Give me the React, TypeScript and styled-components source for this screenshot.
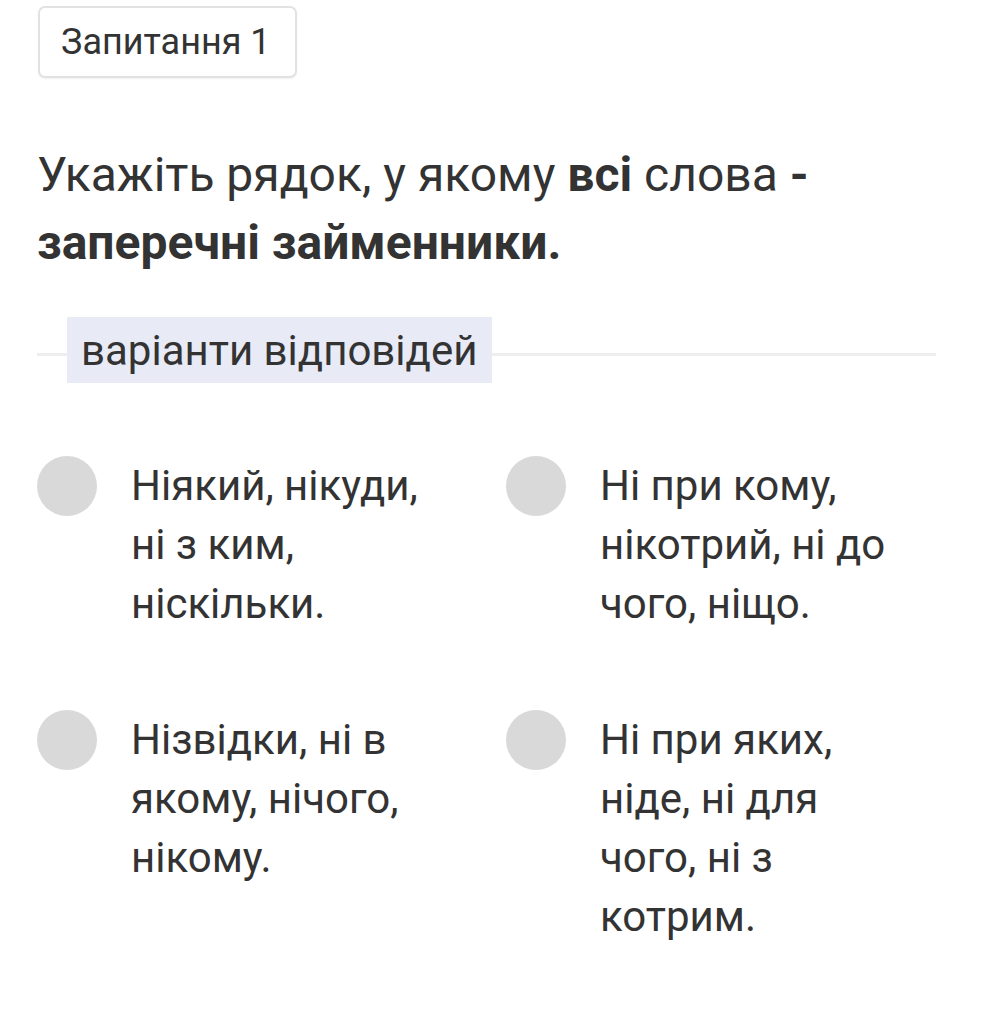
import React from "react";
import styled, { createGlobalStyle } from "styled-components";

const Global = createGlobalStyle`
  html, body { margin: 0; padding: 0; background: #ffffff; }
  body { font-family: Roboto, "Noto Sans", Arial, sans-serif; color: #333333; }
`;

const Page = styled.main`
  width: 899px;
  padding: 6px 0 40px 37px;
  display: flex;
  flex-direction: column;
  align-items: flex-start;
`;

const Badge = styled.div`
  box-sizing: border-box;
  height: 72px;
  margin-left: 1px;
  padding: 0 24px 0 21px;
  display: flex;
  align-items: center;
  border: 2px solid #e2e2e2;
  border-radius: 7px;
  box-shadow: 0 1px 2px rgba(0, 0, 0, 0.06);
  font-size: 36px;
  color: #333333;
`;

const Question = styled.h1`
  margin: 63px 0 0 0;
  font-size: 48px;
  line-height: 68px;
  font-weight: 400;
  color: #333333;
  b { font-weight: 700; }
`;

const Divider = styled.div`
  align-self: stretch;
  margin-top: 40px;
  display: flex;
  align-items: center;
`;

const Rule = styled.div<{ $grow?: boolean }>`
  height: 3px;
  margin-top: 8px;
  background: #eeeeee;
  ${(p) => (p.$grow ? "flex: 1;" : "width: 30px;")}
`;

const Label = styled.div`
  box-sizing: border-box;
  height: 66px;
  padding: 0 15px 0 14px;
  display: flex;
  align-items: center;
  background: #e8eaf6;
  font-size: 42px;
  color: #333333;
`;

const Options = styled.div`
  margin-top: 73px;
  display: grid;
  grid-template-columns: 469px 1fr;
  row-gap: 77px;
  align-self: stretch;
`;

const Option = styled.label`
  display: flex;
  align-items: flex-start;
  gap: 34px;
`;

const Radio = styled.span`
  flex: none;
  width: 60px;
  height: 60px;
  border-radius: 50%;
  background: #d9d9d9;
`;

const OptionText = styled.span`
  max-width: 310px;
  font-size: 42px;
  line-height: 59px;
  color: #333333;
`;

const answers = [
  "Ніякий, нікуди, ні з ким, ніскільки.",
  "Ні при кому, нікотрий, ні до чого, ніщо.",
  "Нізвідки, ні в якому, нічого, нікому.",
  "Ні при яких, ніде, ні для чого, ні з котрим.",
];

export default function App() {
  return (
    <>
      <Global />
      <Page>
        <Badge>Запитання 1</Badge>
        <Question>
          Укажіть рядок, у якому <b>всі</b> слова <b>-</b>
          <br />
          <b>заперечні займенники.</b>
        </Question>
        <Divider>
          <Rule />
          <Label>варіанти відповідей</Label>
          <Rule $grow />
        </Divider>
        <Options>
          {answers.map((a) => (
            <Option key={a}>
              <Radio />
              <OptionText>{a}</OptionText>
            </Option>
          ))}
        </Options>
      </Page>
    </>
  );
}
